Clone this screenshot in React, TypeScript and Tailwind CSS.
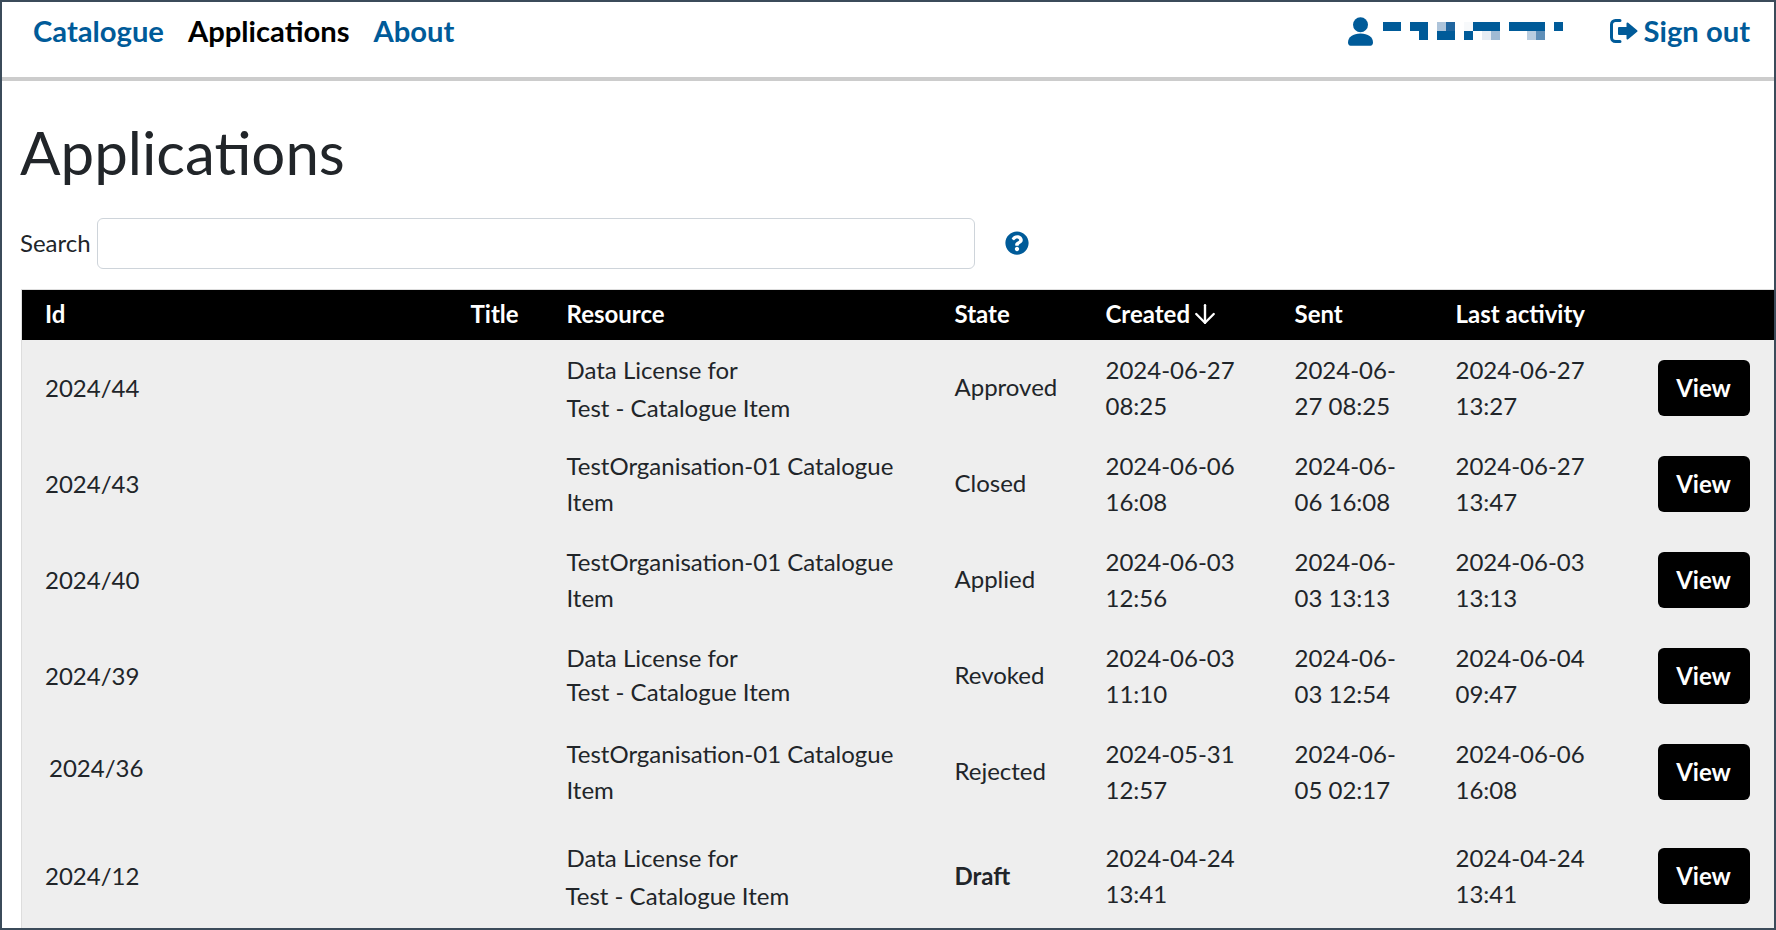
import { ArrowDown } from 'lucide-react';
import { FaQuestionCircle } from 'react-icons/fa';

interface ApplicationRow {
  id: string;
  resource: [string, string];
  resourceLine?: string;
  state: string;
  created: string;
  sent: string;
  activity: string;
}

const rows: ApplicationRow[] = [
  { id: '2024/44', resource: ['Data License for', 'Test - Catalogue Item'], resourceLine: 'mt-[2px] -mb-[2px]', state: 'Approved', created: '2024-06-27 08:25', sent: '2024-06-27 08:25', activity: '2024-06-27 13:27' },
  { id: '2024/43', resource: ['TestOrganisation-01 Catalogue', 'Item'], state: 'Closed', created: '2024-06-06 16:08', sent: '2024-06-06 16:08', activity: '2024-06-27 13:47' },
  { id: '2024/40', resource: ['TestOrganisation-01 Catalogue', 'Item'], state: 'Applied', created: '2024-06-03 12:56', sent: '2024-06-03 13:13', activity: '2024-06-03 13:13' },
  { id: '2024/39', resource: ['Data License for', 'Test - Catalogue Item'], resourceLine: '-mt-[2px] mb-[2px]', state: 'Revoked', created: '2024-06-03 11:10', sent: '2024-06-03 12:54', activity: '2024-06-04 09:47' },
  { id: '2024/36', resource: ['TestOrganisation-01 Catalogue', 'Item'], state: 'Rejected', created: '2024-05-31 12:57', sent: '2024-06-05 02:17', activity: '2024-06-06 16:08' },
  { id: '2024/12', resource: ['Data License for', 'Test - Catalogue Item'], resourceLine: 'mt-[2px] -mb-[2px] -ml-[1px]', state: 'Draft', created: '2024-04-24 13:41', sent: '', activity: '2024-04-24 13:41' },
];

const mosaic: [number, number, string][] = [
  [0, 0, '#005b99'], [1, 0, '#005b99'], [3, 0, '#005b99'], [4, 0, '#005b99'], [6, 0, '#adc4da'], [7, 0, '#1f659f'],
  [9, 0, '#f7f9fb'], [10, 0, '#005b99'], [11, 0, '#005b99'], [12, 0, '#005b99'], [14, 0, '#005b99'], [15, 0, '#005b99'],
  [16, 0, '#005b99'], [17, 0, '#005b99'], [19, 0, '#005b99'],
  [4, 1, '#005b99'], [6, 1, '#005b99'], [7, 1, '#005b99'], [9, 1, '#005b99'], [11, 1, '#e6ecf3'], [12, 1, '#9fbad4'],
  [16, 1, '#b9cde0'], [17, 1, '#5f8fb8'],
];

function UserIcon() {
  return (
    <svg viewBox="0 0 25 29" className="h-[29px] w-[25px] fill-[#005b99]">
      <circle cx="12.500" cy="7.800" r="7.500" />
      <path d="M0 25.500c0-5.500 5-9 12.500-9s12.500 3.500 12.500 9c0 2-1 3.200-2.500 3.200h-20C1 28.700 0 27.500 0 25.500z" />
    </svg>
  );
}

function SignOutIcon() {
  return (
    <svg viewBox="0 0 28 24" className="h-[24px] w-[28px] fill-[#005b99] stroke-[#005b99]">
      <path d="M10 1.500H5.500a4 4 0 0 0-4 4v13a4 4 0 0 0 4 4H10" fill="none" strokeWidth="3" strokeLinecap="round" />
      <path d="M9 9h8.500V4.500L26.500 12l-9 7.500V15H9z" strokeWidth="2" strokeLinejoin="round" />
    </svg>
  );
}

function MaskedName() {
  return (
    <svg viewBox="0 0 180 18" className="h-[18px] w-[180px]" shapeRendering="crispEdges">
      {mosaic.map(([col, row, fill]) => (
        <rect key={`${col}-${row}`} x={col * 9} y={row * 9} width="9" height="9" fill={fill} />
      ))}
    </svg>
  );
}

export default function App() {
  return (
    <div className="h-[930px] overflow-hidden border-2 border-[#3b4b5a] bg-white font-['Lato',sans-serif] text-2xl leading-[36px] text-[#212529]">
      <nav className="flex h-[79px] items-start justify-between border-b-4 border-[#ccc] pl-[31px] pr-[24px] pt-[8px] text-[29.2px] font-bold leading-[42px] text-[#005b99]">
        <div className="flex gap-[24px]">
          <a>Catalogue</a>
          <a className="text-black">Applications</a>
          <a>About</a>
        </div>
        <div className="flex items-center">
          <span className="mr-[10px]"><UserIcon /></span>
          <MaskedName />
          <a className="ml-[47px] flex items-center gap-[6px]">
            <SignOutIcon />
            Sign out
          </a>
        </div>
      </nav>

      <main className="pl-[18px]">
        <h1 className="mt-[35px] text-[60px] font-normal leading-[72px]">Applications</h1>

        <div className="mt-[30px] flex items-center">
          <label htmlFor="search" className="-mt-[2px] mr-[6px]">Search</label>
          <input id="search" className="h-[51px] w-[878px] rounded-[6px] border border-[#ced4da] bg-white" />
          <FaQuestionCircle className="-mt-[2px] ml-[30px] h-[24px] w-[24px] text-[#005b99]" />
        </div>

        <table className="ml-[1px] mt-[20px] w-[1753px] table-fixed border-t border-l border-[#ddd] bg-[#eee]">
          <colgroup>
            <col className="w-[425px]" />
            <col className="w-[96px]" />
            <col className="w-[388px]" />
            <col className="w-[151px]" />
            <col className="w-[189px]" />
            <col className="w-[161px]" />
            <col className="w-[202px]" />
            <col className="w-[141px]" />
          </colgroup>
          <thead className="bg-black text-left text-white">
            <tr className="h-[50px]">
              <th className="pb-[2px] pl-[23px] pr-[24px] font-bold">Id</th>
              <th className="pb-[2px] px-[24px] font-bold">Title</th>
              <th className="pb-[2px] px-[24px] font-bold">Resource</th>
              <th className="pb-[2px] px-[24px] font-bold">State</th>
              <th className="whitespace-nowrap pb-[2px] px-[24px] font-bold">
                <span className="inline-flex items-center">
                  Created
                  <ArrowDown className="-mr-[2px] h-[30px] w-[30px]" strokeWidth={1.9} />
                </span>
              </th>
              <th className="pb-[2px] px-[24px] font-bold">Sent</th>
              <th className="whitespace-nowrap pb-[2px] px-[24px] font-bold">Last activity</th>
              <th />
            </tr>
          </thead>
          <tbody>
            {rows.map((row) => {
              const isDraft = row.state === 'Draft';
              return (
                <tr key={row.id} className={isDraft ? 'h-[112px]' : 'h-[96px]'}>
                  <td className={row.id === '2024/36' ? 'pb-[8px] pl-[27px] pr-[24px]' : 'pl-[23px] pr-[24px]'}>{row.id}</td>
                  <td className="px-[24px]" />
                  <td className="px-[24px]">
                    {row.resource[0]}
                    {row.resourceLine ? <span className={`block ${row.resourceLine}`}>{row.resource[1]}</span> : ` ${row.resource[1]}`}
                  </td>
                  <td className={isDraft ? 'px-[24px] font-bold' : 'pb-[1px] px-[24px]'}>{row.state}</td>
                  <td className="px-[24px]">{row.created}</td>
                  <td className="px-[24px]">{row.sent}</td>
                  <td className="px-[24px]">{row.activity}</td>
                  <td className="pl-[24px] pr-[24px]">
                    <button type="button" className="h-[56px] w-[92px] rounded-[6px] bg-black font-bold text-white">
                      View
                    </button>
                  </td>
                </tr>
              );
            })}
          </tbody>
        </table>
      </main>
    </div>
  );
}
